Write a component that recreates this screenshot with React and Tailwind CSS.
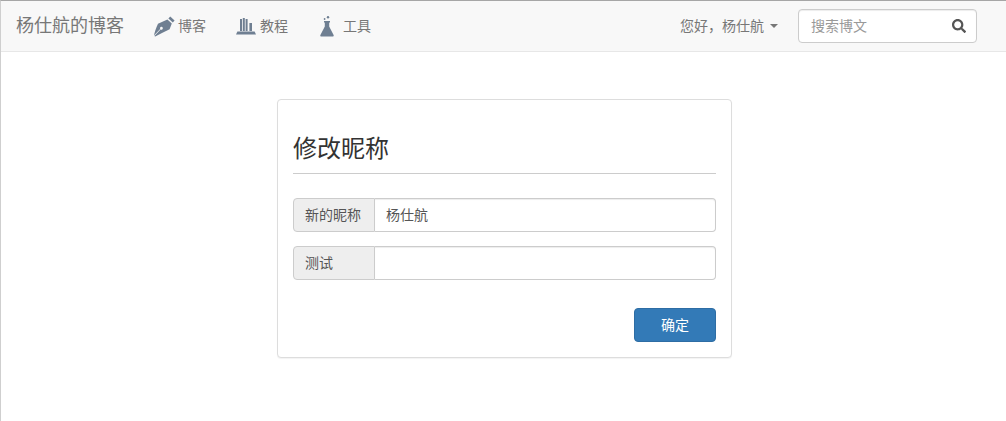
import { FaSearch } from 'react-icons/fa';

const FONT = '[font-family:"Liberation_Sans","Noto_Sans_CJK_SC",sans-serif]';

// Nav glyphs are drawn by hand, none of the packages has this pen/books/flask set.
function PenIcon() {
  return (
    <svg width="21" height="21" viewBox="0 0 21 21" fill="#6f7f92" aria-hidden="true">
      <path d="M16.2 0.6 20.6 4.6 18.8 6.6 14.4 2.6Z" />
      <path d="M13.4 3.6 17.8 7.6 15.6 13.2 8 17 1.2 20.6 0.4 20 6.6 13.6C7.6 14 8.6 13.4 8.8 12.4 9 11.4 8 10.4 7 10.8 6 11.2 5.8 12.2 6.2 13L0 19.6C0.4 17 2 11.8 4 7.8Z" />
    </svg>
  );
}

function BooksIcon() {
  return (
    <svg width="20" height="17" viewBox="0 0 20 17" fill="#6f7f92" aria-hidden="true">
      <path d="M4 1H6V13H4Z" />
      <path d="M6.8 0H8.8V13H6.8Z" />
      <path d="M9.6 1H11.6V13H9.6Z" />
      <path d="M13.4 5H16V13H13.4Z" />
      <path d="M1.4 13.6H18.6L20 16.6H0Z" />
    </svg>
  );
}

function FlaskIcon() {
  return (
    <svg width="14" height="21" viewBox="0 0 14 21" fill="#6f7f92" aria-hidden="true">
      <circle cx="8" cy="1.2" r="1.2" />
      <circle cx="4.6" cy="3" r="0.9" />
      <path d="M4 5H10V6.4H9.2V10.6L13.6 19C14 19.8 13.6 20.6 12.6 20.6H1.4C0.4 20.6 0 19.8 0.4 19L4.8 10.6V6.4H4Z" />
    </svg>
  );
}

function NavItem({ icon, label, className }) {
  return (
    <a className={'flex items-center text-sm text-[#777] ' + className}>
      {icon}
      <span>{label}</span>
    </a>
  );
}

function Field({ label, value }) {
  return (
    <div className="flex h-[34px] w-full text-sm text-[#555]">
      <span className="flex w-[82px] shrink-0 items-center rounded-l border border-[#ccc] bg-[#eee] pl-[11px]">{label}</span>
      <div className="flex flex-1 items-center rounded-r border border-l-0 border-[#ccc] bg-white pl-[11px] shadow-[inset_0_1px_1px_rgba(0,0,0,0.075)]">{value}</div>
    </div>
  );
}

export default function App() {
  return (
    <div className={'min-h-[421px] border-t border-l border-t-[#a6a6a6] border-l-[#cfcfcf] bg-white ' + FONT}>
      <header className="flex h-[51px] items-center border-b border-[#e7e7e7] bg-[#f8f8f8] pr-[29px] pl-[15px]">
        <a className="text-lg text-[#777]">杨仕航的博客</a>
        <nav className="ml-[30px] flex items-center">
          <NavItem icon={<PenIcon />} label="博客" className="gap-[3px]" />
          <NavItem icon={<BooksIcon />} label="教程" className="ml-[30px] gap-1" />
          <NavItem icon={<FlaskIcon />} label="工具" className="ml-8 gap-[9px]" />
        </nav>
        <div className="ml-auto flex items-center">
          <span className="flex items-center text-sm text-[#777]">
            您好，杨仕航
            <span className="ml-[6px] h-0 w-0 border-x-4 border-t-4 border-x-transparent border-t-[#777]" />
          </span>
          <div className="ml-5 flex h-[34px] w-[179px] items-center justify-between rounded border border-[#ccc] bg-white pr-[10px] pl-3 text-sm text-[#999] shadow-[inset_0_1px_1px_rgba(0,0,0,0.075)]">
            <span>搜索博文</span>
            <FaSearch className="size-[14px] text-[#555]" />
          </div>
        </div>
      </header>

      <main className="pt-[47px] pl-[276px]">
        <section className="w-[455px] rounded border border-[#ddd] bg-white px-[15px] pt-5 pb-[15px] shadow-[0_1px_1px_rgba(0,0,0,0.05)]">
          <h3 className="border-b border-[#ccc] pt-3 pb-2 text-2xl leading-[33px] text-[#333]">修改昵称</h3>
          <div className="mt-6 flex flex-col gap-[14px]">
            <Field label="新的昵称" value="杨仕航" />
            <Field label="测试" value="" />
          </div>
          <div className="mt-7 flex justify-end">
            <button className="h-[34px] w-[82px] rounded border border-[#2e6da4] bg-[#337ab7] text-sm text-white">确定</button>
          </div>
        </section>
      </main>
    </div>
  );
}
